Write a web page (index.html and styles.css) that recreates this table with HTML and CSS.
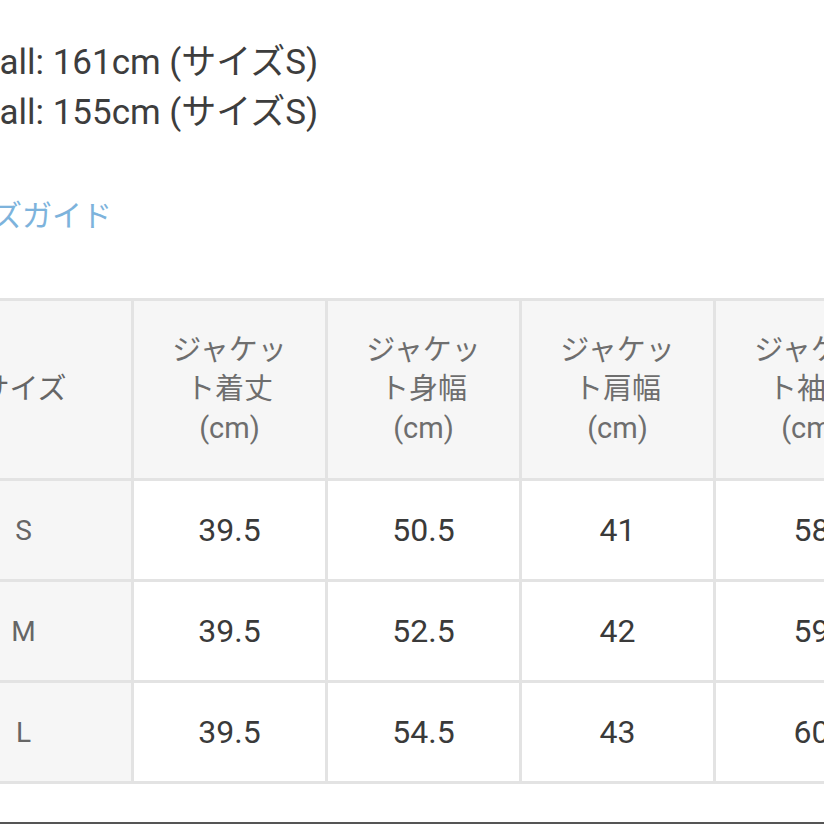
FILE: index.html
```html
<!DOCTYPE html>
<html lang="ja">
<head>
<meta charset="utf-8">
<title>サイズ</title>
<link rel="stylesheet" href="styles.css">
</head>
<body>
<div class="page">
  <div class="content">
    <p class="model">tall: 161cm (サイズS)</p>
    <p class="model">tall: 155cm (サイズS)</p>
    <a class="guide" href="#">サイズガイド</a>
    <div class="size-table">
      <div class="cell head first">サイズ</div>
      <div class="cell head">ジャケッ<br>ト着丈<br>(cm)</div>
      <div class="cell head">ジャケッ<br>ト身幅<br>(cm)</div>
      <div class="cell head">ジャケッ<br>ト肩幅<br>(cm)</div>
      <div class="cell head">ジャケッ<br>ト袖丈<br>(cm)</div>

      <div class="cell first">S</div>
      <div class="cell">39.5</div>
      <div class="cell">50.5</div>
      <div class="cell">41</div>
      <div class="cell">58</div>

      <div class="cell first">M</div>
      <div class="cell">39.5</div>
      <div class="cell">52.5</div>
      <div class="cell">42</div>
      <div class="cell">59</div>

      <div class="cell first">L</div>
      <div class="cell">39.5</div>
      <div class="cell">54.5</div>
      <div class="cell">43</div>
      <div class="cell">60</div>
    </div>
  </div>
</div>
</body>
</html>
```

FILE: styles.css
```css
html, body {
  margin: 0;
  height: 824px;
  overflow: hidden;
  background: #fff;
}

.page {
  height: 824px;
  box-sizing: border-box;
  border-bottom: 2px solid #555;
  overflow: hidden;
}

.content {
  margin-left: -84px;
  padding-top: 38px;
  font-family: Roboto, "Noto Sans CJK JP", sans-serif;
}

.model {
  margin: 0;
  padding-left: 72px;
  font-size: 35px;
  line-height: 50px;
  color: #3d3d3d;
  white-space: nowrap;
}

.guide {
  display: block;
  margin-top: 53px;
  padding-left: 17px;
  font-size: 30px;
  line-height: 49px;
  color: #7db3dc;
  text-decoration: none;
  white-space: nowrap;
}

.size-table {
  margin-top: 58px;
  display: grid;
  grid-template-columns: 218px repeat(4, 194px);
  grid-template-rows: 180px repeat(3, 101px);
  border-top: 3px solid #e3e3e3;
  width: max-content;
}

.cell {
  display: flex;
  align-items: center;
  justify-content: center;
  text-align: center;
  box-sizing: border-box;
  border-right: 3px solid #e3e3e3;
  border-bottom: 3px solid #e3e3e3;
  font-size: 32px;
  color: #3a3a3a;
  background: #fff;
}

.head {
  background: #f6f6f6;
  color: #6e6e6e;
  font-size: 29px;
  line-height: 39px;
}

.first {
  background: #f6f6f6;
  color: #666;
  font-size: 28px;
}

.head.first {
  font-size: 29px;
}
```
